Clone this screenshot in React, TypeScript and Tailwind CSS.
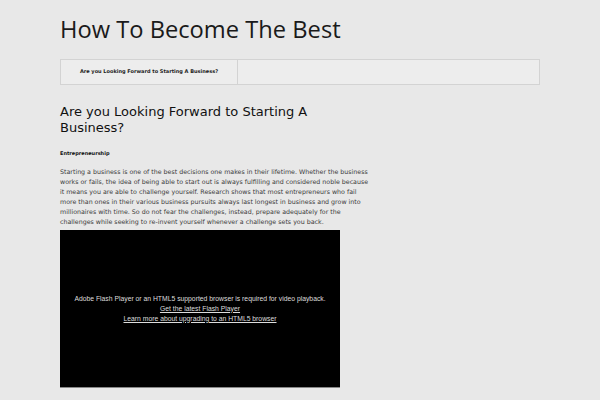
export default function App() {
  return (
    <div className="min-h-[400px] bg-[#e8e8e8] text-[#222]">
      <div className="mx-auto w-[480px] pt-[14px]">
        <h1 className="text-[23.7px] leading-[30px] text-[#1a1a1a] font-['Open_Sans',sans-serif] font-normal">
          How To Become The Best
        </h1>

        {/* Nav */}
        <nav className="mt-[15px] flex h-[26px] border border-[#d3d3d3] bg-[#ededed]">
          <div className="flex w-[177px] items-center justify-center border-r border-[#d3d3d3] text-[5px] font-bold text-[#222] font-['DejaVu_Sans',sans-serif]">
            Are you Looking Forward to Starting A Business?
          </div>
          <div className="flex-1" />
        </nav>

        <article className="mt-[19px] w-[312px] font-['DejaVu_Sans',sans-serif]">
          <h2 className="text-[13px] leading-[16px] text-[#111]">
            Are you Looking Forward to Starting A Business?
          </h2>
          <h3 className="mt-[14px] text-[5px] leading-[6px] font-bold text-[#111]">Entrepreneurship</h3>
          <p className="mt-[11px] text-[6.3px] leading-[10px] text-[#3a3a3a]">
            Starting a business is one of the best decisions one makes in their lifetime. Whether the business
            works or fails, the idea of being able to start out is always fulfilling and considered noble because
            it means you are able to challenge yourself. Research shows that most entrepreneurs who fail more
            than ones in their various business pursuits always last longest in business and grow into
            millionaires with time. So do not fear the challenges, instead, prepare adequately for the
            challenges while seeking to re-invent yourself whenever a challenge sets you back.
          </p>
        </article>

        {/* Video */}
        <div className="mt-[3px] flex h-[158px] w-[280px] flex-col items-center justify-center border-b border-[#888] bg-black text-center text-[6.8px] leading-[10px] text-[#ddd] font-['Liberation_Sans',sans-serif]">
          <p>Adobe Flash Player or an HTML5 supported browser is required for video playback.</p>
          <a className="text-[#ddd] underline">Get the latest Flash Player</a>
          <a className="text-[#ddd] underline">Learn more about upgrading to an HTML5 browser</a>
        </div>
      </div>
    </div>
  )
}
